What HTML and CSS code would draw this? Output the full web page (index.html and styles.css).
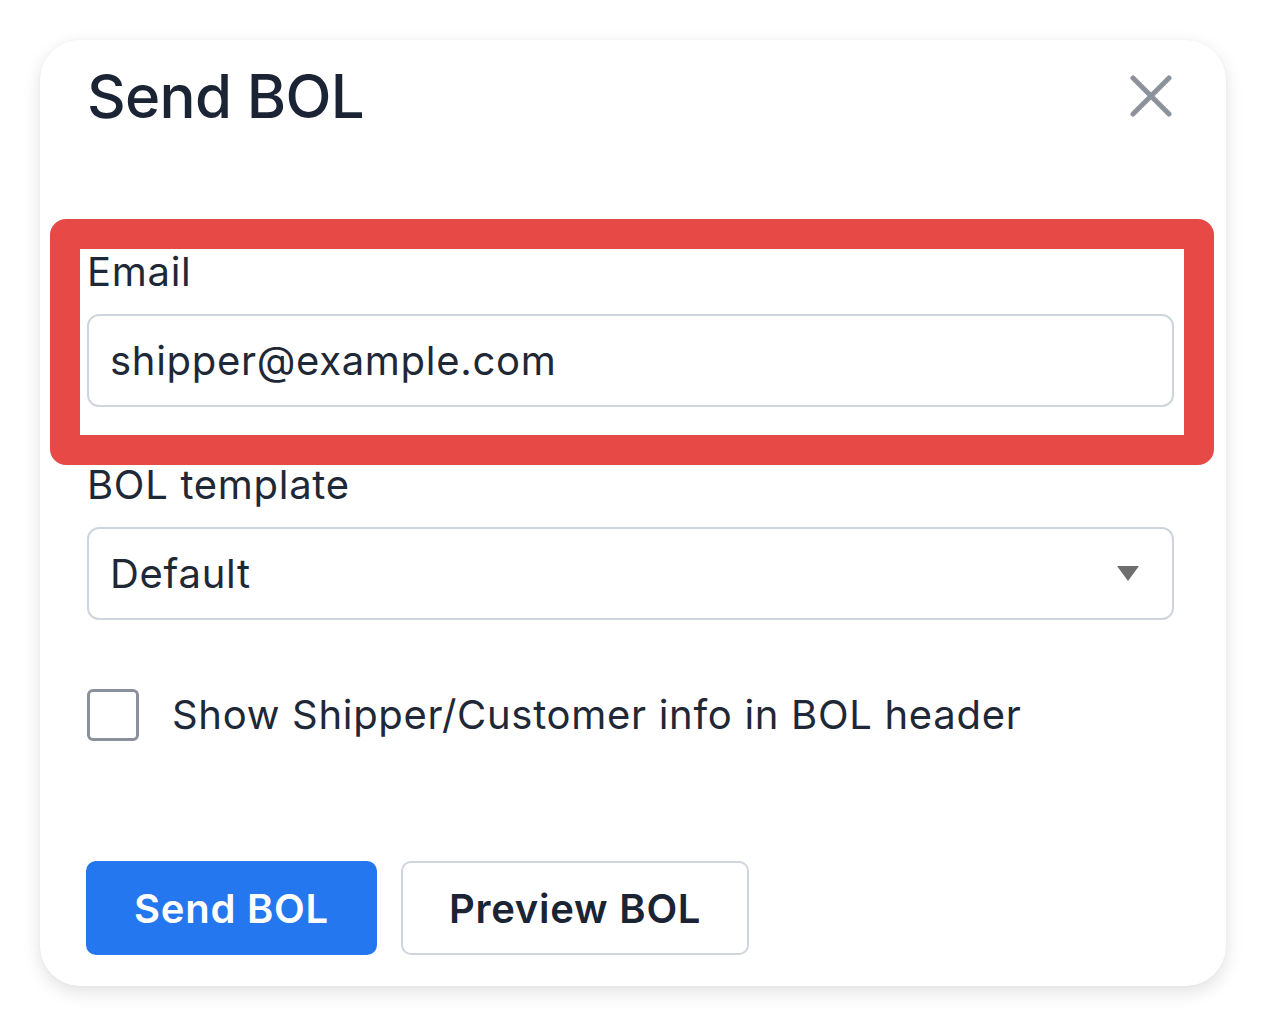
FILE: index.html
```html
<!DOCTYPE html>
<html lang="en">
<head>
    <meta charset="UTF-8">
    <meta name="viewport" content="width=device-width, initial-scale=1.0">
    <title>Send BOL</title>
    <link rel="stylesheet" href="styles.css">
</head>
<body>
    <div class="modal">
        <div class="modal-header">
            <h2>Send BOL</h2>
            <button class="close-button" aria-label="Close">
                <svg width="42" height="42" viewBox="0 0 42 42">
                    <path d="M3 3 L39 39 M39 3 L3 39" stroke="#8c929b" stroke-width="5" stroke-linecap="round" fill="none"/>
                </svg>
            </button>
        </div>

        <div class="field field-email">
            <label for="email">Email</label>
            <input id="email" type="text" value="shipper@example.com">
            <!-- marcação em vermelho por cima do campo -->
            <div class="highlight"></div>
        </div>

        <div class="field field-template">
            <label>BOL template</label>
            <div class="select">
                <span>Default</span>
                <svg class="caret" width="22" height="15" viewBox="0 0 22 15">
                    <path d="M0 0 H22 L11 15 Z" fill="#6e6e6e"/>
                </svg>
            </div>
        </div>

        <label class="check-row">
            <span class="checkbox"></span>
            <span>Show Shipper/Customer info in BOL header</span>
        </label>

        <div class="actions">
            <button class="primary-button">Send BOL</button>
            <button class="secondary-button">Preview BOL</button>
        </div>
    </div>
</body>
</html>
```

FILE: styles.css
```css
* {
    box-sizing: border-box;
}
body {
    margin: 0;
    padding: 40px;
    background-color: #ffffff;
    font-family: Inter, "Noto Sans", sans-serif;
    color: #1f2836;
}
.modal {
    width: 1186px;
    background-color: #ffffff;
    border-radius: 40px;
    box-shadow: 0 6px 18px rgba(0, 0, 0, 0.12), 0 0 3px rgba(0, 0, 0, 0.04);
    padding: 20px 52px 31px 47px;
}
.modal-header {
    display: flex;
    justify-content: space-between;
    align-items: center;
    margin-bottom: 116px;
}
h2 {
    margin: 0;
    font-size: 60px;
    line-height: 72px;
    font-weight: 500;
    letter-spacing: -0.7px;
    color: #1b2434;
}
.close-button {
    background: none;
    border: none;
    padding: 0;
    margin-right: 2px;
    width: 42px;
    height: 42px;
    cursor: pointer;
}
.close-button svg {
    display: block;
}
.field {
    position: relative;
}
.field label {
    display: block;
    font-size: 40px;
    line-height: 48px;
    letter-spacing: 0.7px;
    margin-bottom: 18px;
}
.field input,
.select {
    width: 100%;
    height: 93px;
    border: 2px solid #cfd5dd;
    border-radius: 12px;
    padding: 0 21px;
    font-family: inherit;
    font-size: 40px;
    letter-spacing: 0.7px;
    color: #1f2836;
    background-color: #ffffff;
    outline: none;
}
.select {
    display: flex;
    align-items: center;
    justify-content: space-between;
    padding-right: 33px;
}
.caret {
    display: block;
}
.highlight {
    position: absolute;
    top: -29px;
    left: -37px;
    right: -40px;
    bottom: -58px;
    border: 30px solid #e64946;
    border-radius: 16px;
    pointer-events: none;
}
.field-template {
    margin-top: 54px;
}
.check-row {
    display: flex;
    align-items: center;
    gap: 33px;
    margin-top: 69px;
    font-size: 40px;
    line-height: 52px;
    letter-spacing: 0.7px;
}
.checkbox {
    width: 52px;
    height: 52px;
    border: 3px solid #8b919b;
    border-radius: 6px;
    flex-shrink: 0;
}
.actions {
    display: flex;
    gap: 24px;
    margin-top: 120px;
}
.primary-button,
.secondary-button {
    height: 94px;
    padding: 0 46px;
    font-family: inherit;
    font-size: 40px;
    font-weight: 600;
    letter-spacing: 0.75px;
    border-radius: 10px;
    cursor: pointer;
}
.primary-button {
    background-color: #2477ee;
    border: 2px solid #2477ee;
    color: #ffffff;
    margin-left: -1px;
}
.secondary-button {
    background-color: #ffffff;
    border: 2px solid #cfd5dd;
    color: #1b2434;
}
```
